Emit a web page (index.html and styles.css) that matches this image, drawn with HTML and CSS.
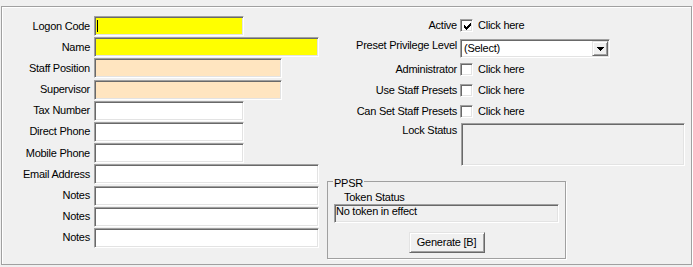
FILE: index.html
```html
<!DOCTYPE html>
<html>
<head>
<meta charset="utf-8">
<link rel="stylesheet" href="styles.css">
</head>
<body>
<div class="frame">
  <div class="left">
    <span class="lbl">Logon Code</span><div class="field req w150"><span class="caret"></span></div>
    <span class="lbl">Name</span><div class="field req w225"></div>
    <span class="lbl">Staff Position</span><div class="field opt w188"></div>
    <span class="lbl">Supervisor</span><div class="field opt w188"></div>
    <span class="lbl">Tax Number</span><div class="field w150"></div>
    <span class="lbl">Direct Phone</span><div class="field w150"></div>
    <span class="lbl">Mobile Phone</span><div class="field w150"></div>
    <span class="lbl">Email Address</span><div class="field w225"></div>
    <span class="lbl">Notes</span><div class="field w225"></div>
    <span class="lbl">Notes</span><div class="field w225"></div>
    <span class="lbl">Notes</span><div class="field w225"></div>
  </div>
  <div class="right">
    <div class="rrow r-active">
      <span class="rlbl">Active</span>
      <span class="chk"><svg class="mark" width="7" height="7" viewBox="0 0 7 7" shape-rendering="crispEdges"><path d="M6 0h1v1h-1zM5 1h2v1h-2zM0 2h1v1h-1zM4 2h3v1h-3zM0 3h2v1h-2zM3 3h3v1h-3zM0 4h5v1h-5zM1 5h3v1h-3zM2 6h1v1h-1z" fill="#000"/></svg></span>
      <span class="cap">Click here</span>
    </div>
    <div class="rrow r-preset">
      <span class="rlbl">Preset Privilege Level</span>
      <div class="combo">
        <span class="combo-text">(Select)</span>
        <span class="combo-btn"><svg width="7" height="4" viewBox="0 0 7 4" shape-rendering="crispEdges"><path d="M0 0h7v1h-7zM1 1h5v1h-5zM2 2h3v1h-3zM3 3h1v1h-1z" fill="#000"/></svg></span>
      </div>
    </div>
    <div class="rrow r-admin">
      <span class="rlbl">Administrator</span>
      <span class="chk"></span>
      <span class="cap">Click here</span>
    </div>
    <div class="rrow">
      <span class="rlbl">Use Staff Presets</span>
      <span class="chk"></span>
      <span class="cap">Click here</span>
    </div>
    <div class="rrow">
      <span class="rlbl">Can Set Staff Presets</span>
      <span class="chk"></span>
      <span class="cap">Click here</span>
    </div>
    <div class="rrow r-lock">
      <span class="rlbl">Lock Status</span>
      <div class="lockbox"></div>
    </div>
    <fieldset class="group">
      <legend class="legend">PPSR</legend>
      <div class="tok-lbl">Token Status</div>
      <div class="tokfield">No token in effect</div>
      <button class="btn" type="button">Generate [B]</button>
    </fieldset>
  </div>
</div>
</body>
</html>
```

FILE: styles.css
```css
html, body {
  margin: 0;
  padding: 0;
  background: #f0f0f0;
}
body {
  font-family: "Liberation Sans", Arial, sans-serif;
  font-size: 11px;
  line-height: 13px;
  letter-spacing: -0.25px;
  color: #000;
}
.frame {
  margin: 6px 0 0 1px;
  width: 691px;
  height: 259px;
  box-sizing: border-box;
  border: 1px solid #a0a0a0;
  box-shadow: inset 1px 1px 0 #fff, 1px 1px 0 #fff;
  display: flex;
  gap: 8px;
}
.left {
  width: 317px;
  flex-shrink: 0;
  padding-top: 9px;
  display: grid;
  grid-template-columns: 88px 225px;
  grid-auto-rows: 20px;
  column-gap: 4px;
  row-gap: 1.2px;
  align-items: center;
  align-content: start;
}
.lbl {
  justify-self: end;
  white-space: nowrap;
}
.field,
.lockbox,
.tokfield,
.combo,
.chk {
  box-sizing: border-box;
  border: 1px solid;
  border-color: #a0a0a0 #fff #fff #a0a0a0;
  box-shadow: inset 1px 1px 0 #696969, inset -1px -1px 0 #e3e3e3;
}
.field {
  height: 20px;
  background: #fff;
  display: flex;
  align-items: center;
  padding-left: 2px;
}
.field.req { background: #ffff00; }
.field.opt { background: #ffe5c0; }
.w150 { width: 150px; }
.w188 { width: 188px; }
.w225 { width: 225px; }
.caret {
  width: 1px;
  height: 12px;
  background: #000;
}
.right {
  flex: 1;
  padding-top: 8px;
  display: flex;
  flex-direction: column;
  align-items: flex-start;
}
.rrow {
  display: flex;
  align-items: center;
  height: 21px;
}
.rlbl {
  width: 130px;
  margin-right: 3px;
  flex-shrink: 0;
  text-align: right;
  white-space: nowrap;
}
.r-preset {
  margin-top: 3px;
  height: 19px;
  align-items: flex-start;
}
.r-admin { margin-top: 1px; }
.r-lock {
  margin-top: 1px;
  height: auto;
  align-items: flex-start;
}
.r-lock .rlbl { margin-top: 1px; }
.chk {
  width: 13px;
  height: 13px;
  background: #fff;
  padding: 2px;
  display: block;
}
.mark {
  display: block;
  margin: 1px 0 0 1px;
}
.cap {
  margin-left: 5px;
  white-space: nowrap;
}
.combo {
  width: 150px;
  height: 19px;
  background: #fff;
  padding: 1px;
  display: flex;
}
.combo-text {
  flex: 1;
  padding-left: 2px;
  line-height: 15px;
}
.combo-btn {
  width: 16px;
  height: 15px;
  box-sizing: border-box;
  border: 1px solid;
  border-color: #e3e3e3 #696969 #696969 #e3e3e3;
  box-shadow: inset 1px 1px 0 #fff, inset -1px -1px 0 #a0a0a0;
  background: #f0f0f0;
  display: flex;
  align-items: center;
  justify-content: center;
}
.combo-btn svg { display: block; margin-left: 1px; }
.lockbox {
  margin-left: 1px;
  width: 224px;
  height: 43px;
  background: #f0f0f0;
}
.group {
  margin: 6px 0 0 0;
  width: 239px;
  box-sizing: border-box;
  min-width: 0;
  padding: 0 6px 5px;
  border: 1px solid #a0a0a0;
  box-shadow: 1px 1px 0 #fff;
}
.legend {
  padding: 5px 1px 0;
  margin-left: -1px;
  line-height: 13px;
}
.tok-lbl {
  margin: 1px 0 0 10px;
}
.tokfield {
  width: 225px;
  height: 19px;
  background: #f0f0f0;
  padding: 0 1px;
  white-space: nowrap;
}
.btn {
  display: block;
  margin: 9px auto 0;
  width: 76px;
  height: 21px;
  padding: 0;
  box-sizing: border-box;
  font: inherit;
  letter-spacing: inherit;
  color: #000;
  background: #f0f0f0;
  border: 1px solid;
  border-color: #e3e3e3 #696969 #696969 #e3e3e3;
  box-shadow: inset 1px 1px 0 #fff, inset -1px -1px 0 #a0a0a0;
}
```
